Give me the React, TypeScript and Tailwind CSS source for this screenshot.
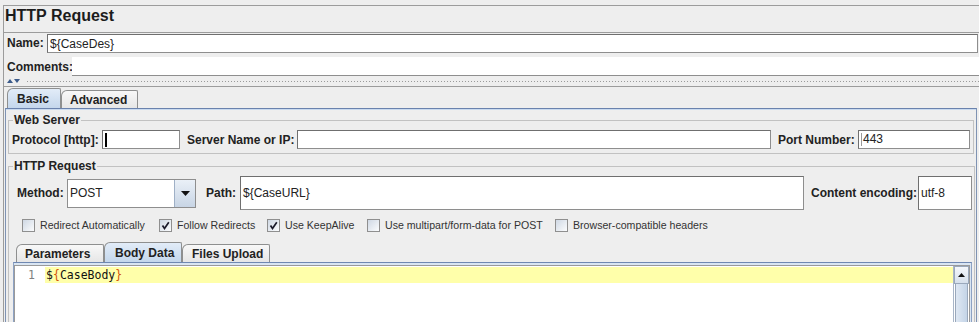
import React from "react";

function Field({ className, children }: { className?: string; children?: React.ReactNode }) {
  return (
    <div className={`flex items-center bg-white border border-[#8e8e8e] border-t-[#6f6f6f] border-l-[#6f6f6f] pl-[2px] text-[12px] text-[#222] ${className ?? ""}`}>
      {children}
    </div>
  );
}

function Check({ on, label, w }: { on?: boolean; label: string; w: string }) {
  return (
    <div className={`flex items-center shrink-0 ${w}`}>
      <div className="w-[13px] h-[13px] shrink-0 border border-[#8f8f8f] bg-linear-to-br from-[#cfd8e4] to-[#fbfcfd] flex items-center justify-center">
        {on && (
          <svg width="9" height="9" viewBox="0 0 9 9">
            <path d="M1.5 4.5 L3.5 7.5 L7.8 1.2" fill="none" stroke="#1b1b2b" strokeWidth="1.7" />
          </svg>
        )}
      </div>
      <span className="ml-[5px] whitespace-nowrap text-[10.6px] text-[#333] leading-[13px]">{label}</span>
    </div>
  );
}

function Tab({ label, active, w, pl }: { label: string; active?: boolean; w: string; pl: string }) {
  return (
    <div
      className={`${w} ${pl} border border-b-0 border-[#8e8f8f] rounded-tl-[6px] rounded-tr-[2px] text-[12px] font-bold text-[#222] flex items-center ${
        active
          ? "h-[20px] bg-linear-to-b from-[#e2ecf8] to-[#c4d7ec]"
          : "h-[18px] bg-linear-to-b from-[#f8f8f8] to-[#e6e6e6]"
      }`}
    >
      {label}
    </div>
  );
}

export default function App() {
  return (
    <div className="w-[979px] h-[322px] overflow-hidden bg-[#eeeeee] font-['Liberation_Sans',Arial,sans-serif] text-[#222]">
      <div className="mt-[5px] ml-[3px] border-l border-t border-[#9c9c9c]">
        {/* title */}
        <div className="h-[27px] pl-[1px] border-b border-[#9c9c9c] text-[16px] font-bold leading-[20px] text-[#1c1c1c]">
          HTTP Request
        </div>

        {/* name */}
        <div className="flex pt-[1px] pl-[3px] pr-[1px]">
          <div className="w-[40px] shrink-0 text-[12px] font-bold leading-[19px]">Name:</div>
          <Field className="flex-1 h-[19px]">${"{CaseDes}"}</Field>
        </div>

        {/* comments */}
        <div className="flex h-[23px] pt-[4px] pl-[3px]">
          <div className="w-[65px] shrink-0 text-[12px] font-bold leading-[18px] pt-[1px] whitespace-nowrap">Comments:</div>
          <div className="flex-1 h-[19px] bg-white border-b border-[#8e8e8e]" />
        </div>

        {/* splitter */}
        <div className="h-[11px] pt-[4px] border-b border-[#9c9c9c] relative">
          <div className="absolute left-[3px] top-[3px] flex gap-[1px]">
            <svg width="6" height="4" viewBox="0 0 6 4">
              <path d="M0 4 L3 0 L6 4 Z" fill="#3a5a8a" />
            </svg>
            <svg width="6" height="4" viewBox="0 0 6 4">
              <path d="M0 0 L6 0 L3 4 Z" fill="#3a5a8a" />
            </svg>
          </div>
          <div className="ml-[22px] h-[3px] bg-[radial-gradient(circle,#9a9a9a_0.7px,transparent_0.9px)] bg-[length:3px_3px]" />
        </div>

        {/* main tabs */}
        <div className="h-[21px] flex items-end pl-[3px]">
          <Tab label="Basic" active w="w-[54px]" pl="pl-[9px]" />
          <Tab label="Advanced" w="w-[77px]" pl="pl-[8px]" />
        </div>

        {/* tab panel */}
        <div className="ml-[1px] mr-[2px] h-[220px] border-t border-l border-r border-[#7f93b3] border-t-[#6a82ad]">
          <div className="h-[1px] bg-[#c9daef]" />

          <fieldset className="ml-[2px] mr-[2px] mt-[3px] border border-[#c2c2c2] px-0 pt-[3px] pb-[4px]">
            <legend className="ml-[4px] px-[1px] text-[12px] font-bold leading-[14px]">Web Server</legend>
            <div className="flex items-center pl-[3px] pr-[3px]">
              <div className="w-[90px] shrink-0 text-[12px] font-bold">Protocol [http]:</div>
              <Field className="w-[78px] h-[19px] shrink-0">
                <div className="w-[2px] h-[14px] bg-black" />
              </Field>
              <div className="ml-[7px] w-[110px] shrink-0 text-[12px] font-bold">Server Name or IP:</div>
              <Field className="flex-1 h-[19px]" />
              <div className="ml-[7px] w-[80px] shrink-0 text-[12px] font-bold">Port Number:</div>
              <Field className="w-[112px] h-[19px] shrink-0">
                <span className="border-l border-[#9a9a9a] pl-[1px] leading-[13px]">443</span>
              </Field>
            </div>
          </fieldset>

          <fieldset className="ml-[2px] mr-[1px] mt-[5px] border border-[#c2c2c2] px-0 pt-[3px] pb-[20px]">
            <legend className="ml-[4px] px-[1px] text-[12px] font-bold leading-[14px]">HTTP Request</legend>

            <div className="flex items-center h-[34px] pl-[8px] pr-[2px]">
              <div className="w-[50px] shrink-0 text-[12px] font-bold">Method:</div>
              <div className="w-[129px] h-[29px] shrink-0 flex bg-white border border-[#8e8e8e]">
                <div className="flex-1 flex items-center pl-[2px] text-[12px]">POST</div>
                <div className="w-[21px] border-l border-[#9fb0c6] bg-linear-to-b from-[#eaf0f7] to-[#c8d5e5] flex items-center justify-center">
                  <svg width="9" height="5" viewBox="0 0 9 5">
                    <path d="M0 0 L9 0 L4.5 5 Z" fill="#111" />
                  </svg>
                </div>
              </div>
              <div className="ml-[10px] w-[34px] shrink-0 text-[12px] font-bold">Path:</div>
              <Field className="flex-1 h-[34px]">${"{CaseURL}"}</Field>
              <div className="ml-[7px] w-[107px] shrink-0 text-[12px] font-bold">Content encoding:</div>
              <Field className="w-[54px] h-[34px] shrink-0">utf-8</Field>
            </div>

            <div className="flex items-center mt-[9px] pl-[13px]">
              <Check label="Redirect Automatically" w="w-[137px]" />
              <Check on label="Follow Redirects" w="w-[108px]" />
              <Check on label="Use KeepAlive" w="w-[100px]" />
              <Check label="Use multipart/form-data for POST" w="w-[188px]" />
              <Check label="Browser-compatible headers" w="w-[160px]" />
            </div>

            <div className="mt-[11px] ml-[4px] mr-[2px]">
              <div className="h-[19px] flex items-end pl-[3px]">
                <Tab label="Parameters" w="w-[88px]" pl="pl-[8px]" />
                <Tab label="Body Data" active w="w-[78px]" pl="pl-[10px]" />
                <Tab label="Files Upload" w="w-[88px]" pl="pl-[9px]" />
              </div>
              <div className="border-t border-l border-r border-[#8da2c4] border-t-[#6f88b2] bg-[#d9e5f2] pt-[2px] pr-[1px]">
                <div className="h-[80px] flex bg-white border border-[#9a9a9a]">
                  <div className="w-[30px] shrink-0 pt-[1px] pr-[10px] text-right font-['DejaVu_Sans_Mono',monospace] text-[11.5px] leading-[16px] text-[#808080]">
                    1
                  </div>
                  <div className="flex-1 pt-[1px]">
                    <div className="h-[16px] bg-[#ffffaa] pl-[1px] font-['DejaVu_Sans_Mono',monospace] text-[11.5px] leading-[16px] text-[#111]">
                      $<span className="text-[#d2550a]">{"{"}</span>CaseBody<span className="text-[#d2550a]">{"}"}</span>
                    </div>
                  </div>
                  <div className="w-[16px] shrink-0 flex flex-col border-l border-[#a9b6c8]">
                    <div className="h-[18px] border border-[#9aa8bb] bg-linear-to-b from-[#f4f7fb] to-[#d6e0ec] flex items-center justify-center">
                      <svg width="7" height="4" viewBox="0 0 7 4">
                        <path d="M0 4 L3.5 0 L7 4 Z" fill="#111" />
                      </svg>
                    </div>
                    <div className="flex-1 mx-[1px] border-x border-[#9aa8bb] bg-linear-to-r from-[#dfe8f3] to-[#c4d4e7]" />
                  </div>
                </div>
              </div>
            </div>
          </fieldset>
        </div>
      </div>
    </div>
  );
}
